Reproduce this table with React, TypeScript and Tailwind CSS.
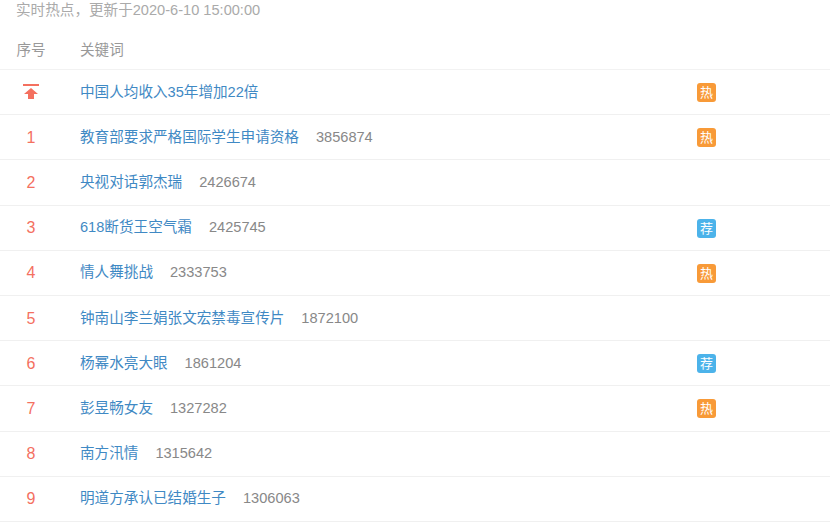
import React from "react";

type Row = { rank: string; kw: string; count?: string; tag?: "hot" | "rec" };

const rows: Row[] = [
  { rank: "top", kw: "中国人均收入35年增加22倍", tag: "hot" },
  { rank: "1", kw: "教育部要求严格国际学生申请资格", count: "3856874", tag: "hot" },
  { rank: "2", kw: "央视对话郭杰瑞", count: "2426674" },
  { rank: "3", kw: "618断货王空气霜", count: "2425745", tag: "rec" },
  { rank: "4", kw: "情人舞挑战", count: "2333753", tag: "hot" },
  { rank: "5", kw: "钟南山李兰娟张文宏禁毒宣传片", count: "1872100" },
  { rank: "6", kw: "杨幂水亮大眼", count: "1861204", tag: "rec" },
  { rank: "7", kw: "彭昱畅女友", count: "1327282", tag: "hot" },
  { rank: "8", kw: "南方汛情", count: "1315642" },
  { rank: "9", kw: "明道方承认已结婚生子", count: "1306063" },
];

function TopIcon() {
  return (
    <svg width="16" height="15" viewBox="0 0 16 15" className="block">
      <rect x="0" y="0" width="16" height="2" fill="#f4705f" />
      <polygon points="8,4 1,10 5,10 5,15 11,15 11,10 15,10" fill="#f4705f" />
    </svg>
  );
}

export default function App() {
  return (
    <div
      className="w-[830px] h-[522px] overflow-hidden bg-white"
      style={{ fontFamily: '"Liberation Sans", "Noto Sans CJK SC", sans-serif' }}
    >
      <div className="pl-4 h-[20px] leading-[20px] text-[14.6px] text-[#aaaaaa]">
        实时热点，更新于2020-6-10 15:00:00
      </div>
      <div className="mt-[9px] h-[41px] pt-[3px] flex items-center border-b border-[#f2f2f2] text-[14.6px] text-[#999999]">
        <div className="ml-4 w-[30px] text-center">序号</div>
        <div className="ml-[34px]">关键词</div>
      </div>
      {rows.map((r, i) => (
        <div
          key={i}
          className="h-[45.2px] pt-[1px] flex items-center border-b border-[#f0f0f0] text-[14.6px]"
        >
          <div className="ml-4 w-[30px] flex justify-center text-[#f4705f] text-[16px]">
            {r.rank === "top" ? (
              <div className="-mt-[2px]">
                <TopIcon />
              </div>
            ) : (
              r.rank
            )}
          </div>
          <div className="ml-[34px] flex-1 flex items-center">
            <span className="text-[#3f89c4]">{r.kw}</span>
            {r.count && <span className="ml-[17px] text-[#888888]">{r.count}</span>}
          </div>
          <div className="w-[19px] mr-[114px]">
            {r.tag && (
              <div
                className={
                  "w-[19px] h-[19px] rounded-[3px] flex items-center justify-center text-white text-[13px] leading-none " +
                  (r.tag === "hot" ? "bg-[#f89a38]" : "bg-[#4cb3ea]")
                }
              >
                {r.tag === "hot" ? "热" : "荐"}
              </div>
            )}
          </div>
        </div>
      ))}
    </div>
  );
}
